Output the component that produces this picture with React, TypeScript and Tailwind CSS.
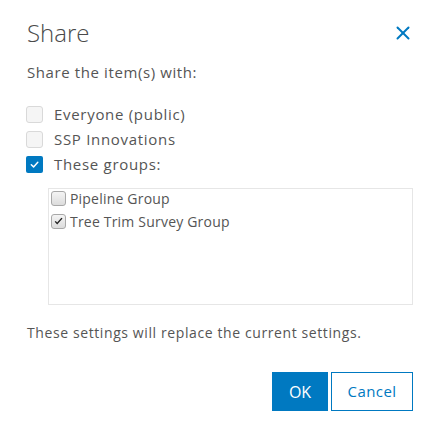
import { X } from "lucide-react";

const font = { fontFamily: "'Open Sans', Lato, sans-serif" };

const BigCheck = ({ checked, label }: { checked?: boolean; label: string }) => (
  <label className="flex h-[25px] items-center">
    {checked ? (
      <span className="flex h-[17px] w-[17px] items-center justify-center rounded-[2px] bg-[#0079c1]">
        <svg width="11" height="11" viewBox="0 0 12 12" fill="none">
          <path d="M2.5 6.2 L5 8.6 L9.6 3.6" stroke="white" strokeWidth="1.6" strokeLinecap="round" strokeLinejoin="round" />
        </svg>
      </span>
    ) : (
      <span className="h-[17px] w-[17px] rounded-[3px] border border-[#d9d9d9] bg-[#f5f5f5]" />
    )}
    <span className="ml-[11px] text-[15px] tracking-[0.7px] text-[#555]">{label}</span>
  </label>
);

const SmallCheck = ({ checked, label }: { checked?: boolean; label: string }) => (
  <label className="flex h-[23px] items-center">
    <span className="flex h-[15px] w-[15px] items-center justify-center rounded-[3px] border border-[#a8a8a8] bg-gradient-to-b from-[#f4f4f4] to-[#dcdcdc]">
      {checked && (
        <svg width="11" height="11" viewBox="0 0 12 12">
          <path d="M1.8 6.3 L4.6 9.2 L10.4 2.6 L9.2 1.8 L4.5 7.2 L3 5.4 Z" fill="#222" />
        </svg>
      )}
    </span>
    <span className="ml-[4px] text-[14px] tracking-[0.2px] text-[#555]">{label}</span>
  </label>
);

export default function App() {
  return (
    <div className="h-[439px] w-[442px] bg-white pl-[27px] pr-[29px] text-[#555]" style={font}>
      <div className="flex items-center justify-between pt-[14px]">
        <h1 className="text-[24px] font-light leading-[38px] text-[#4a4a4a]">Share</h1>
        <button className="mr-[-1px] text-[#0079c1]">
          <X size={22} strokeWidth={2.2} />
        </button>
      </div>
      <p className="mt-[10px] text-[15px] leading-[20px] tracking-[0.6px]">Share the item(s) with:</p>
      <div className="mt-[20px] ml-[-1px] flex flex-col">
        <BigCheck label="Everyone (public)" />
        <BigCheck label="SSP Innovations" />
        <BigCheck checked label="These groups:" />
      </div>
      <div className="mt-[11px] ml-[21px] h-[117px] border border-[#e6e6e6] px-[2px]">
        <div className="-mt-[2px]">
          <SmallCheck label="Pipeline Group" />
          <SmallCheck checked label="Tree Trim Survey Group" />
        </div>
      </div>
      <p className="mt-[18px] text-[14px] leading-[20px] tracking-[0.6px]">These settings will replace the current settings.</p>
      <div className="mt-[29px] flex justify-end gap-[3px]">
        <button className="h-[39px] w-[56px] bg-[#0079c1] text-[16px] text-white">OK</button>
        <button className="h-[39px] w-[82px] border border-[#0079c1] bg-white text-[15px] tracking-[0.4px] text-[#0079c1]">Cancel</button>
      </div>
    </div>
  );
}
